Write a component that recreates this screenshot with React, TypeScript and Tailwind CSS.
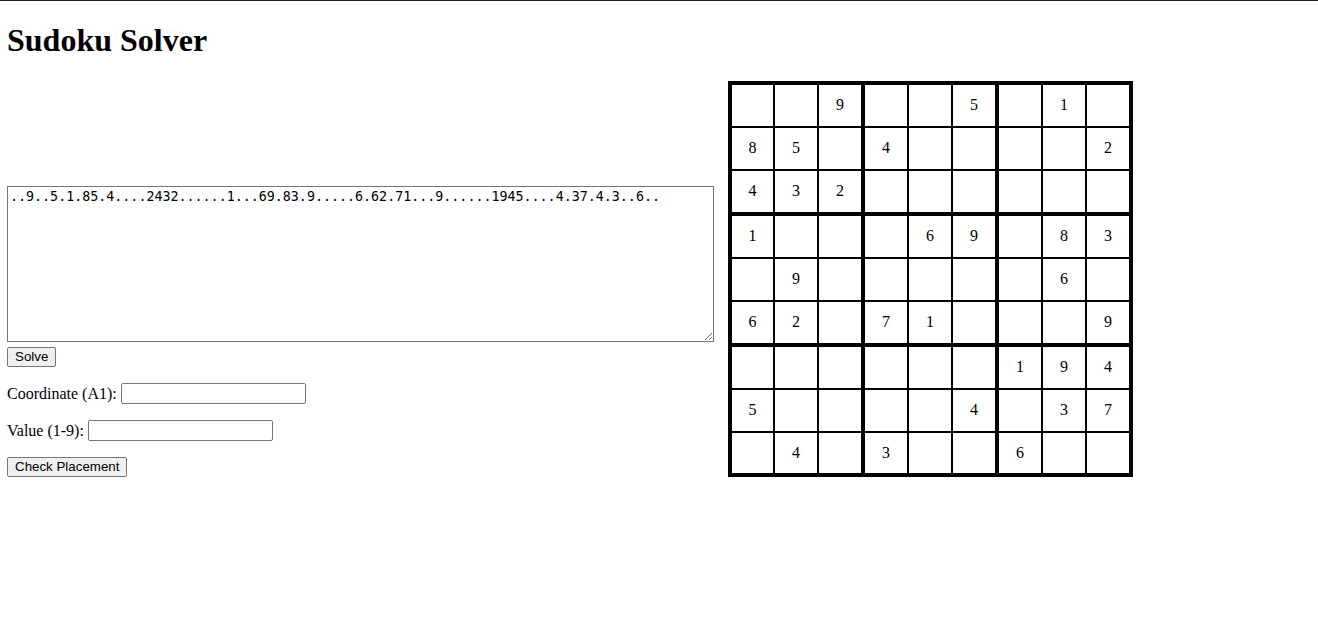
const puzzle =
  "..9..5.1.85.4....2432......1...69.83.9.....6.62.71...9......1945....4.37.4.3..6..";

const rows: string[][] = Array.from({ length: 9 }, (_, r) =>
  puzzle.slice(r * 9, r * 9 + 9).split("")
);

export default function App() {
  return (
    <div className="min-h-screen bg-white border-t border-[#222] px-[7px] font-['Liberation_Serif',serif] text-black">
      <h1 className="text-[32px] font-bold leading-[37px] mt-[21px] mb-[22px]">
        Sudoku Solver
      </h1>

      <div className="flex items-end gap-[14px]">
        {/* Form */}
        <div className="flex flex-col items-start">
          <textarea
            rows={10}
            defaultValue={puzzle}
            className="w-[707px] h-[156px] border border-[#767676] p-[2px] font-['DejaVu_Sans_Mono',monospace] text-[13.33px] leading-[15px] text-black outline-none"
          />
          <button className="mt-[5px] h-[20px] px-[7px] bg-[#efefef] border border-[#767676] rounded-[2px] font-['Liberation_Sans',sans-serif] text-[13.33px] leading-none">
            Solve
          </button>

          <div className="mt-[16px] flex items-center h-[21px] text-[16px]">
            <label>Coordinate (A1):</label>
            <input
              type="text"
              className="ml-[4px] w-[185px] h-[21px] border border-[#767676] rounded-[2px] px-[2px] font-['Liberation_Sans',sans-serif] text-[13.33px]"
            />
          </div>

          <div className="mt-[16px] flex items-center h-[21px] text-[16px]">
            <label>Value (1-9):</label>
            <input
              type="text"
              className="ml-[4px] w-[185px] h-[21px] border border-[#767676] rounded-[2px] px-[2px] font-['Liberation_Sans',sans-serif] text-[13.33px]"
            />
          </div>

          <button className="mt-[16px] h-[20px] px-[7px] bg-[#efefef] border border-[#767676] rounded-[2px] font-['Liberation_Sans',sans-serif] text-[13.33px] leading-none">
            Check Placement
          </button>
        </div>

        {/* Grid */}
        <table className="border-separate border-spacing-0 border-2 border-black">
          <tbody>
            {rows.map((row, r) => (
              <tr key={r}>
                {row.map((val, c) => (
                  <td
                    key={c}
                    className={`p-0 border-black ${
                      c % 3 === 0 ? "border-l-2" : "border-l"
                    } ${c % 3 === 2 ? "border-r-2" : "border-r"} ${
                      r % 3 === 0 ? "border-t-2" : "border-t"
                    } ${r % 3 === 2 ? "border-b-2" : "border-b"}`}
                  >
                    <div
                      className={`${c === 0 ? "w-[41px]" : "w-[42px]"} ${
                        r === 8 ? "h-[40px]" : "h-[41px]"
                      } flex items-center justify-center text-[16px] pb-[1px]`}
                    >
                      {val === "." ? "" : val}
                    </div>
                  </td>
                ))}
              </tr>
            ))}
          </tbody>
        </table>
      </div>
    </div>
  );
}
